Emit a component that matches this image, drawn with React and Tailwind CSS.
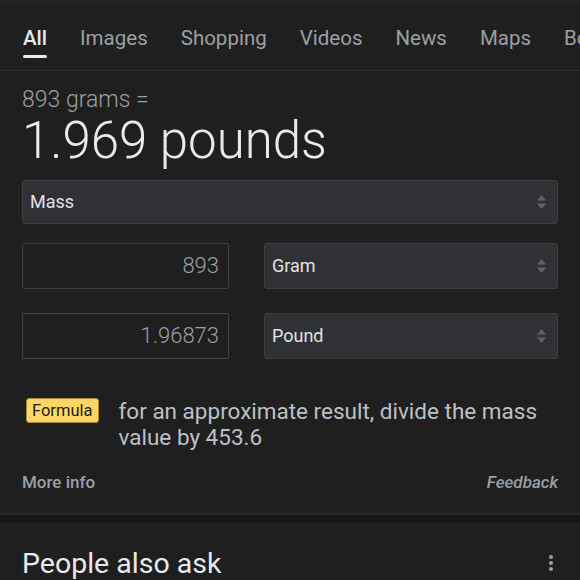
import React from "react";

const font = { fontFamily: "Roboto, 'Noto Sans', sans-serif" };

function Arrows() {
  return (
    <svg width="11" height="16" viewBox="0 0 11 16" className="shrink-0">
      <path d="M5.5 1 L10 6.5 L1 6.5 Z" fill="#5f6368" />
      <path d="M5.5 15 L10 9.5 L1 9.5 Z" fill="#5f6368" />
    </svg>
  );
}

function Select({ label, className }) {
  return (
    <div
      className={
        "flex items-center justify-between bg-[#303134] border border-[#3c4043] rounded-[3px] pl-[7px] pr-[10px] " +
        className
      }
    >
      <span className="text-[18px] leading-[22px] text-[#e0e2e5]">{label}</span>
      <Arrows />
    </div>
  );
}

function NumInput({ value }) {
  return (
    <div className="w-[207px] h-[46px] shrink-0 flex items-center justify-end border border-[#3c4043] rounded-[2px] bg-[#1f1f1f] pr-[9px]">
      <span className="text-[22px] leading-[26px] font-light text-[#9aa0a6]">{value}</span>
    </div>
  );
}

export default function App() {
  const tabs = ["All", "Images", "Shopping", "Videos", "News", "Maps", "Books"];
  return (
    <div className="w-[580px] h-[580px] overflow-hidden bg-[#1f1f1f]" style={font}>
      <div className="h-[6px] bg-gradient-to-b from-[#222428] to-[#1f1f1f]" />
      <div className="h-[65px] border-b border-[#2c2c2c] flex gap-[33px] pl-[23px] pt-[20px] whitespace-nowrap overflow-hidden">
        {tabs.map((t, i) => (
          <div key={t} className="flex flex-col shrink-0">
            <span
              className={
                "text-[20.5px] leading-[24px] " +
                (i === 0 ? "text-[#e8eaed] font-medium" : "text-[#9aa0a6]")
              }
            >
              {t}
            </span>
            {i === 0 && <div className="mt-[5px] h-[3px] rounded-full bg-[#e8eaed]" />}
          </div>
        ))}
      </div>

      <div className="px-[22px]">
        <div className="mt-[16px] text-[23px] leading-[26px] font-light text-[#9aa0a6]">893 grams =</div>
        <div className="mt-[1px] text-[51px] leading-[54px] font-light text-[#e8eaed]">1.969 pounds</div>

        <Select label="Mass" className="mt-[12px] h-[44px]" />

        <div className="mt-[19px] flex gap-[35px]">
          <NumInput value="893" />
          <Select label="Gram" className="flex-1 h-[46px]" />
        </div>
        <div className="mt-[24px] flex gap-[35px]">
          <NumInput value="1.96873" />
          <Select label="Pound" className="flex-1 h-[46px]" />
        </div>

        <div className="mt-[39px] flex items-start">
          <span className="ml-[4px] shrink-0 h-[25px] px-[5px] flex items-center rounded-[3px] bg-[#fdd663] border border-[#a88a35] text-[16.5px] leading-[20px] text-[#202124]">
            Formula
          </span>
          <p className="ml-[20px] text-[22.5px] leading-[26px] text-[#bdc1c6]">
            for an approximate result, divide the mass value by 453.6
          </p>
        </div>

        <div className="mt-[22px] flex justify-between items-center text-[17px] leading-[20px] text-[#9aa0a6]">
          <span className="font-medium">More info</span>
          <span className="italic font-medium">Feedback</span>
        </div>
      </div>

      <div className="mt-[21px] border-t-2 border-[#262626] h-[10px] bg-[#171717]" />

      <div className="px-[22px] pt-[25px] flex justify-between items-start">
        <span className="text-[28.5px] leading-[32px] text-[#e8eaed]">People also ask</span>
        <div className="mt-[7px] mr-[5px] flex flex-col gap-[2px]">
          <span className="w-[4px] h-[4px] rounded-full bg-[#9aa0a6]" />
          <span className="w-[4px] h-[4px] rounded-full bg-[#9aa0a6]" />
          <span className="w-[4px] h-[4px] rounded-full bg-[#9aa0a6]" />
        </div>
      </div>
    </div>
  );
}
